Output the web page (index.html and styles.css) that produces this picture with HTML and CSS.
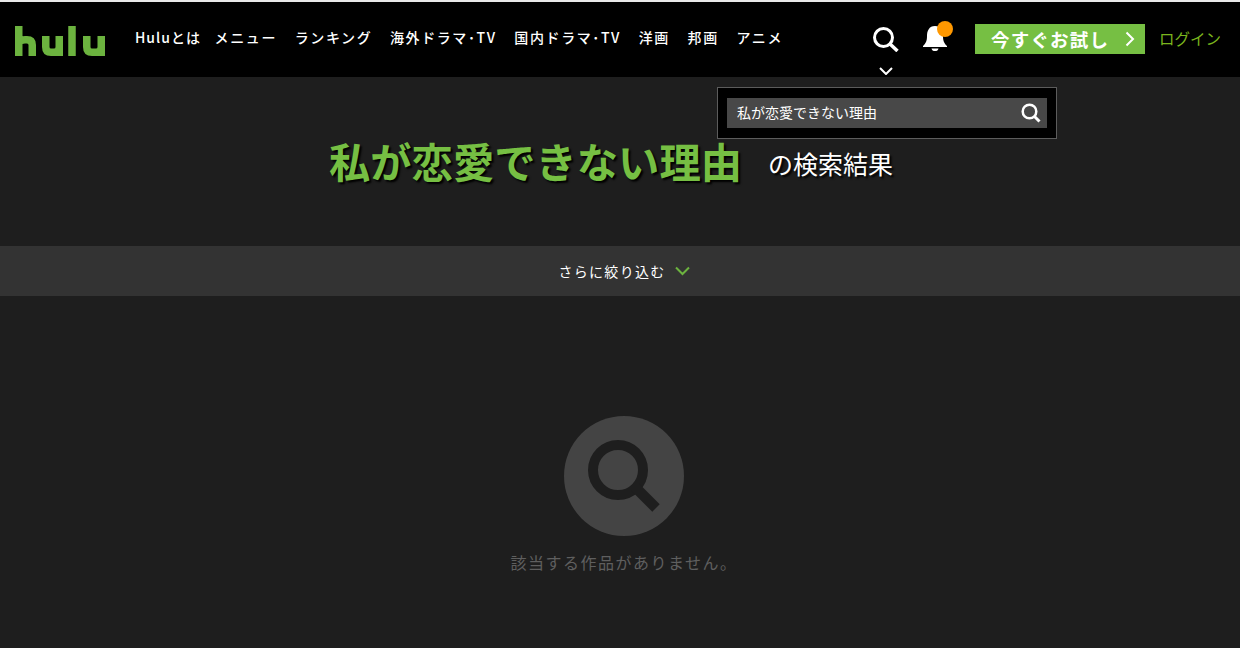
FILE: index.html
```html
<!DOCTYPE html>
<html lang="ja">
<head>
  <meta charset="UTF-8">
  <title>Hulu</title>
  <link rel="stylesheet" href="styles.css">
</head>
<body>

<header class="header">
  <svg class="logo" width="90" height="30" viewBox="0 0 90 30" fill="none" stroke="#6cb33f" stroke-width="7.500">
    <path d="M3.750 0V30M3.750 18Q3.750 13.750 10 13.750H12Q17.250 13.750 17.250 19V30"/>
    <path d="M30.750 10V21Q30.750 26.250 36 26.250H39Q44.250 26.250 44.250 21V10M44.250 10V30"/>
    <path d="M57 0V30"/>
    <path d="M71.750 10V21Q71.750 26.250 77 26.250H81Q86.250 26.250 86.250 21V10M86.250 10V30"/>
  </svg>
  <nav class="nav">
    <a class="nav-first">Huluとは</a>
    <a>メニュー</a>
    <a>ランキング</a>
    <a>海外ドラマ･TV</a>
    <a>国内ドラマ･TV</a>
    <a>洋画</a>
    <a>邦画</a>
    <a>アニメ</a>
  </nav>
  <div class="header-right">
    <div class="search-toggle">
      <svg width="26" height="25" viewBox="0 0 26 25" fill="none" stroke="#fff" stroke-width="3">
        <circle cx="10.500" cy="10.500" r="9"/>
        <path d="M16.500 16.500L24.500 24" stroke-width="3.500"/>
      </svg>
      <svg class="search-caret" width="14" height="8" viewBox="0 0 14 8" fill="none" stroke="#fff" stroke-width="2">
        <path d="M1 1L7 7L13 1"/>
      </svg>
    </div>
    <div class="bell">
      <svg width="24" height="25" viewBox="0 0 24 25" fill="#fff">
        <path d="M12 0C6 0 4 5 4 10C4 15 3 17 0 20V21H24V20C21 17 20 15 20 10C20 5 18 0 12 0Z"/>
        <path d="M8.500 22.500H15.500C15 24.500 14 25 12 25C10 25 9 24.500 8.500 22.500Z"/>
      </svg>
      <span class="bell-dot"></span>
    </div>
    <a class="trial-btn">
      <span>今すぐお試し</span>
      <svg width="10" height="16" viewBox="0 0 10 16" fill="none" stroke="#fff" stroke-width="2">
        <path d="M1.500 1.500L8 8L1.500 14.500"/>
      </svg>
    </a>
    <a class="login">ログイン</a>
  </div>
  <div class="search-panel">
    <div class="search-box">
      <span>私が恋愛できない理由</span>
      <svg width="20" height="20" viewBox="0 0 20 20" fill="none" stroke="#fff" stroke-width="2.500">
        <circle cx="8.500" cy="8.500" r="6.800"/>
        <path d="M13.500 13.500L18.500 18.500" stroke-width="3"/>
      </svg>
    </div>
  </div>
</header>

<main>
  <div class="result-title">
    <h1>私が恋愛できない理由</h1>
    <span>の検索結果</span>
  </div>

  <div class="filter-bar">
    <span>さらに絞り込む</span>
    <svg width="15" height="10" viewBox="0 0 15 10" fill="none" stroke="#6cb33f" stroke-width="2">
      <path d="M1 1.500L7.500 8L14 1.500"/>
    </svg>
  </div>

  <div class="empty">
    <div class="empty-icon">
      <svg width="72" height="72" viewBox="0 0 72 72" fill="none" stroke="#1e1e1e" stroke-width="10">
        <circle cx="30" cy="30" r="25"/>
        <path d="M47 47L68 68" stroke-width="10.500"/>
      </svg>
    </div>
    <p>該当する作品がありません。</p>
  </div>
</main>

</body>
</html>
```

FILE: styles.css
```css
body {
  margin: 0;
  height: 648px;
  overflow: hidden;
  background-color: #1e1e1e;
  color: #fff;
  font-family: "Noto Sans CJK JP", "Liberation Sans", sans-serif;
}

a {
  color: inherit;
  text-decoration: none;
}

.header {
  position: relative;
  display: flex;
  align-items: center;
  height: 75px;
  border-top: 2px solid #e8e8e8;
  background-color: #000;
}

.logo {
  margin: 3px 0 0 15px;
  flex-shrink: 0;
}

.nav {
  display: flex;
  gap: 17.700px;
  margin: 0 0 6px 30px;
  font-size: 14px;
  font-weight: 500;
  letter-spacing: 1.600px;
  white-space: nowrap;
}

.nav-first {
  margin-right: -4px;
  letter-spacing: 1px;
}

.header-right {
  display: flex;
  align-items: center;
  align-self: stretch;
  margin-left: auto;
  padding-right: 19px;
}

.search-toggle {
  display: flex;
  flex-direction: column;
  align-items: center;
  gap: 15px;
  align-self: flex-start;
  margin-top: 25px;
}

.search-caret {
  display: block;
}

.bell {
  position: relative;
  align-self: flex-start;
  height: 25px;
  margin: 24px 28px 0 24px;
}

.bell-dot {
  position: absolute;
  top: -5px;
  right: -6px;
  width: 16px;
  height: 16px;
  border-radius: 50%;
  background-color: #ff9800;
}

.trial-btn {
  display: flex;
  align-items: center;
  justify-content: space-between;
  box-sizing: border-box;
  width: 170px;
  height: 30px;
  padding: 0 10px 0 16px;
  margin: 0 14px 1px 0;
  background-color: #76bf43;
  font-size: 18.500px;
  font-weight: 700;
  letter-spacing: 1.200px;
}

.login {
  margin-bottom: 3px;
  color: #7ab51d;
  font-size: 15.500px;
}

.search-panel {
  position: absolute;
  top: 85px;
  left: 717px;
  box-sizing: border-box;
  width: 340px;
  height: 52px;
  padding: 10px 9px;
  background-color: #000;
  border: 1px solid #5c5c5c;
}

.search-box {
  display: flex;
  align-items: center;
  justify-content: space-between;
  height: 30px;
  padding: 0 6px 0 10px;
  background-color: #484848;
  font-size: 14px;
}

.search-box span {
  margin-top: -2px;
}

.result-title {
  display: flex;
  align-items: center;
  justify-content: center;
  gap: 26px;
  box-sizing: border-box;
  height: 169px;
  padding: 0 18px 3px 0;
  text-shadow: 2px 2px 2px #000;
}

.result-title h1 {
  margin: 0;
  color: #76bf43;
  font-size: 41.300px;
  font-weight: 700;
}

.result-title span {
  margin-top: 5px;
  font-size: 25px;
}

.filter-bar {
  display: flex;
  align-items: center;
  justify-content: center;
  gap: 9px;
  height: 50px;
  padding-left: 8px;
  background-color: #333;
  font-size: 14px;
  letter-spacing: 1.300px;
}

.empty {
  display: flex;
  flex-direction: column;
  align-items: center;
  padding-top: 120px;
}

.empty-icon {
  display: flex;
  align-items: center;
  justify-content: center;
  width: 120px;
  height: 120px;
  margin-left: 8px;
  border-radius: 50%;
  background-color: #444;
}

.empty p {
  margin: 14px 0 0 8px;
  color: #5f5f5f;
  font-size: 16px;
  letter-spacing: 1.500px;
}
```
